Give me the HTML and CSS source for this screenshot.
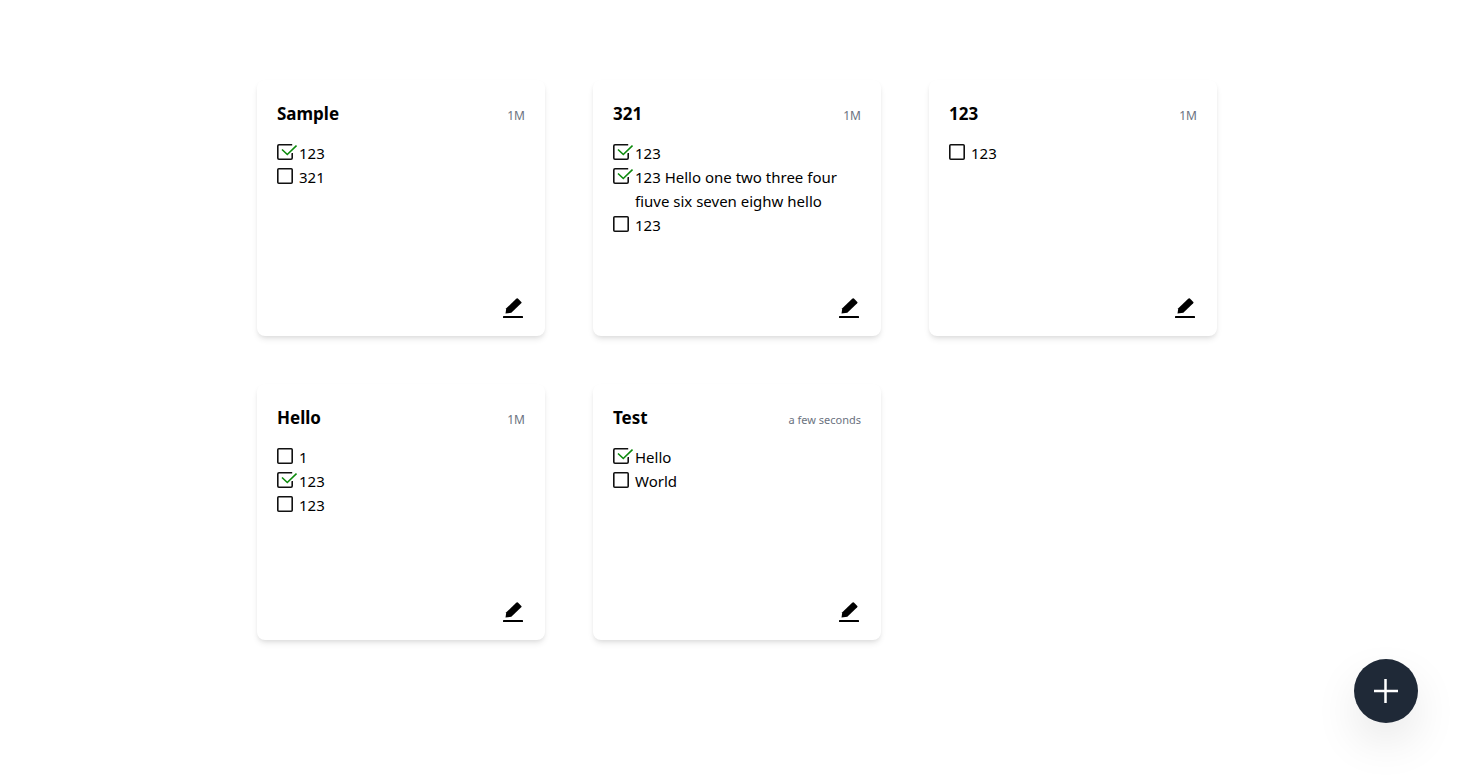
FILE: index.html
```html
<!DOCTYPE html>
<html lang="en">
<head>
<meta charset="utf-8">
<meta name="viewport" content="width=device-width, initial-scale=1">
<title>Notes</title>
<link rel="stylesheet" href="styles.css">
</head>
<body>
<svg class="sprite" aria-hidden="true">
  <symbol id="box" viewBox="0 0 20 16"><rect x=".8" y=".8" width="14.400" height="14.400" rx="1" fill="none" stroke="#111" stroke-width="1.600"/></symbol>
  <symbol id="box-checked" viewBox="0 0 20 16"><path d="M15.200 .8H2Q.8 .8 .8 2V14Q.8 15.200 2 15.200H14Q15.200 15.200 15.200 14V9" fill="none" stroke="#111" stroke-width="1.600"/><path d="M5 5.500L10.300 10.500L19.500 1.500" fill="none" stroke="#fff" stroke-width="4"/><path d="M5 5.500L10.300 10.500L19.500 1.500" fill="none" stroke="#0c8a0c" stroke-width="1.600"/></symbol>
  <symbol id="pencil" viewBox="0 0 20 20"><path d="M2.500 15.500L3.300 10.300L13.200 .7Q14.100 0 14.900 .6L18.300 3.900Q18.900 4.600 18.200 5.300L8.300 14.800Z"/><rect y="18" width="20" height="2" rx=".5"/></symbol>
</svg>
<main class="notes">
  <article class="card">
    <header class="card-header"><h2 class="title">Sample</h2><time class="age">1M</time></header>
    <ul class="tasks">
      <li><label class="task"><input class="check" type="checkbox" checked><svg class="mark"><use href="#box-checked"/></svg><span>123</span></label></li>
      <li><label class="task"><input class="check" type="checkbox"><svg class="mark"><use href="#box"/></svg><span>321</span></label></li>
    </ul>
    <button class="edit" type="button" aria-label="Edit Sample"><svg class="pencil"><use href="#pencil"/></svg></button>
  </article>
  <article class="card">
    <header class="card-header"><h2 class="title">321</h2><time class="age">1M</time></header>
    <ul class="tasks">
      <li><label class="task"><input class="check" type="checkbox" checked><svg class="mark"><use href="#box-checked"/></svg><span>123</span></label></li>
      <li><label class="task"><input class="check" type="checkbox" checked><svg class="mark"><use href="#box-checked"/></svg><span>123 Hello one two three four fiuve six seven eighw hello</span></label></li>
      <li><label class="task"><input class="check" type="checkbox"><svg class="mark"><use href="#box"/></svg><span>123</span></label></li>
    </ul>
    <button class="edit" type="button" aria-label="Edit 321"><svg class="pencil"><use href="#pencil"/></svg></button>
  </article>
  <article class="card">
    <header class="card-header"><h2 class="title">123</h2><time class="age">1M</time></header>
    <ul class="tasks">
      <li><label class="task"><input class="check" type="checkbox"><svg class="mark"><use href="#box"/></svg><span>123</span></label></li>
    </ul>
    <button class="edit" type="button" aria-label="Edit 123"><svg class="pencil"><use href="#pencil"/></svg></button>
  </article>
  <article class="card">
    <header class="card-header"><h2 class="title">Hello</h2><time class="age">1M</time></header>
    <ul class="tasks">
      <li><label class="task"><input class="check" type="checkbox"><svg class="mark"><use href="#box"/></svg><span>1</span></label></li>
      <li><label class="task"><input class="check" type="checkbox" checked><svg class="mark"><use href="#box-checked"/></svg><span>123</span></label></li>
      <li><label class="task"><input class="check" type="checkbox"><svg class="mark"><use href="#box"/></svg><span>123</span></label></li>
    </ul>
    <button class="edit" type="button" aria-label="Edit Hello"><svg class="pencil"><use href="#pencil"/></svg></button>
  </article>
  <article class="card">
    <header class="card-header"><h2 class="title">Test</h2><time class="age age-long">a few seconds</time></header>
    <ul class="tasks">
      <li><label class="task"><input class="check" type="checkbox" checked><svg class="mark"><use href="#box-checked"/></svg><span>Hello</span></label></li>
      <li><label class="task"><input class="check" type="checkbox"><svg class="mark"><use href="#box"/></svg><span>World</span></label></li>
    </ul>
    <button class="edit" type="button" aria-label="Edit Test"><svg class="pencil"><use href="#pencil"/></svg></button>
  </article>
</main>
<button class="add" type="button" aria-label="Add note"><svg class="plus" viewBox="0 0 24 24"><path d="M11.500 0V24M0 12H24" fill="none" stroke="#fff" stroke-width="2.500"/></svg></button>
</body>
</html>
```
FILE: styles.css
```css
* { box-sizing: border-box; }
body {
  margin: 0;
  background: #fff;
  color: #000;
  font: 15px/24px "Segoe UI", "Noto Sans", "Open Sans", sans-serif;
}
button { border: 0; padding: 0; background: none; cursor: pointer; }
.sprite { display: none; }
.notes {
  display: grid;
  grid-template-columns: repeat(auto-fill, minmax(256px, 1fr));
  gap: 48px;
  max-width: 1008px;
  margin: 0 auto;
  padding: 80px 24px;
}
.card {
  display: flex;
  flex-direction: column;
  min-height: 256px;
  padding: 20px 20px 16px;
  border-radius: 8px;
  background: #fff;
  box-shadow: 0 4px 6px -1px rgba(0, 0, 0, .1), 0 2px 4px -1px rgba(0, 0, 0, .06);
}
.card-header {
  display: flex;
  justify-content: space-between;
  align-items: baseline;
  margin-bottom: 13px;
}
.title { margin: 0; font-size: 17px; line-height: 28px; }
.age { color: #6b7280; font-size: 12px; line-height: 20px; }
.age-long { font-size: 11px; }
.tasks { flex: 1; margin: 0; padding: 0; list-style: none; }
.task {
  display: grid;
  grid-template-columns: 20px 1fr;
  column-gap: 2px;
}
.check, .mark { grid-area: 1 / 1; width: 20px; height: 16px; margin: 3px 0 0; }
.check { appearance: none; }
.mark { pointer-events: none; }
.edit {
  display: grid;
  place-items: center;
  align-self: flex-end;
  width: 24px;
  height: 24px;
}
.pencil { width: 20px; height: 20px; }
.add {
  position: fixed;
  right: 56px;
  bottom: 56px;
  display: grid;
  place-items: center;
  width: 64px;
  height: 64px;
  border-radius: 50%;
  background: #1f2937;
  box-shadow: 0 20px 50px -8px rgba(0, 0, 0, .16);
}
.plus { width: 24px; height: 24px; }
```
